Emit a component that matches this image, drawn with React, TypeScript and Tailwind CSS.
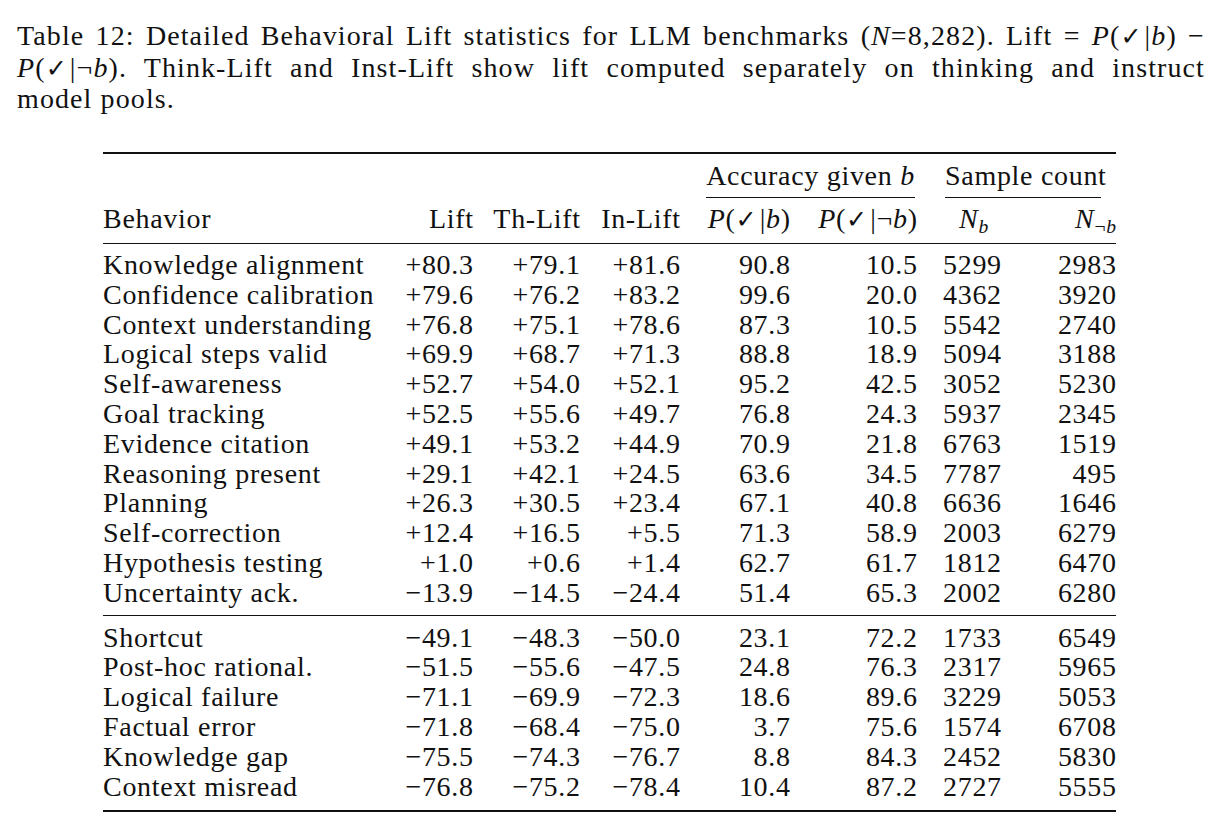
type Row = [string, string, string, string, string, string, string, string];

const cols = "grid grid-cols-[282px_88px_107px_100px_110px_127px_84px_115px]";
const num = "text-right -mr-[0.7px]";

const positive: Row[] = [
  ["Knowledge alignment", "+80.3", "+79.1", "+81.6", "90.8", "10.5", "5299", "2983"],
  ["Confidence calibration", "+79.6", "+76.2", "+83.2", "99.6", "20.0", "4362", "3920"],
  ["Context understanding", "+76.8", "+75.1", "+78.6", "87.3", "10.5", "5542", "2740"],
  ["Logical steps valid", "+69.9", "+68.7", "+71.3", "88.8", "18.9", "5094", "3188"],
  ["Self-awareness", "+52.7", "+54.0", "+52.1", "95.2", "42.5", "3052", "5230"],
  ["Goal tracking", "+52.5", "+55.6", "+49.7", "76.8", "24.3", "5937", "2345"],
  ["Evidence citation", "+49.1", "+53.2", "+44.9", "70.9", "21.8", "6763", "1519"],
  ["Reasoning present", "+29.1", "+42.1", "+24.5", "63.6", "34.5", "7787", "495"],
  ["Planning", "+26.3", "+30.5", "+23.4", "67.1", "40.8", "6636", "1646"],
  ["Self-correction", "+12.4", "+16.5", "+5.5", "71.3", "58.9", "2003", "6279"],
  ["Hypothesis testing", "+1.0", "+0.6", "+1.4", "62.7", "61.7", "1812", "6470"],
  ["Uncertainty ack.", "−13.9", "−14.5", "−24.4", "51.4", "65.3", "2002", "6280"],
];

const negative: Row[] = [
  ["Shortcut", "−49.1", "−48.3", "−50.0", "23.1", "72.2", "1733", "6549"],
  ["Post-hoc rational.", "−51.5", "−55.6", "−47.5", "24.8", "76.3", "2317", "5965"],
  ["Logical failure", "−71.1", "−69.9", "−72.3", "18.6", "89.6", "3229", "5053"],
  ["Factual error", "−71.8", "−68.4", "−75.0", "3.7", "75.6", "1574", "6708"],
  ["Knowledge gap", "−75.5", "−74.3", "−76.7", "8.8", "84.3", "2452", "5830"],
  ["Context misread", "−76.8", "−75.2", "−78.4", "10.4", "87.2", "2727", "5555"],
];

// P(✓|b) or P(✓|¬b), kept as one block so justification leaves it alone
function Prob({ neg }: { neg?: boolean }) {
  return (
    <span className="inline-block">
      <span className="italic">P</span>(
      <span className="font-['DejaVu_Sans',sans-serif] font-bold text-[0.9em] tracking-normal">✓</span>
      <span className="pl-[3px]">|</span>
      {neg && "¬"}
      <span className="italic">b</span>)
    </span>
  );
}

function DataRow({ r }: { r: Row }) {
  return (
    <div className={`${cols} h-[29.8px] leading-[29.8px]`}>
      <div>{r[0]}</div>
      <div className={num}>{r[1]}</div>
      <div className={num}>{r[2]}</div>
      <div className={num}>{r[3]}</div>
      <div className={num}>{r[4]}</div>
      <div className={num}>{r[5]}</div>
      <div className="pl-[26px]">{r[6]}</div>
      <div className={num}>{r[7]}</div>
    </div>
  );
}

export default function App() {
  return (
    <div className="w-[1219px] h-[831px] bg-white text-[#111] font-['Liberation_Serif',serif] text-[28px] tracking-[0.7px] whitespace-nowrap overflow-hidden">
      {/* caption */}
      <div className="pl-[17px] pt-[21px] w-[1205px] leading-[30.5px] tracking-[1.1px]">
        <div className="text-justify [text-align-last:justify]">
          Table 12: Detailed Behavioral Lift statistics for LLM benchmarks (<span className="italic">N</span>=8,282). Lift = <Prob /> −
        </div>
        <div className="text-justify [text-align-last:justify]">
          <Prob neg />. Think-Lift and Inst-Lift show lift computed separately on thinking and instruct
        </div>
        <div>model pools.</div>
      </div>

      {/* table */}
      <div className="ml-[103px] mt-[37px] w-[1013px]">
        <div className="h-[2px] bg-[#111]" />

        <div className={`${cols} pt-[7px]`}>
          <div className="col-start-5 col-span-2 ml-[26px] mr-[2px] pb-[6px] border-b border-[#111] text-center leading-[30.3px]">
            Accuracy given <span className="italic">b</span>
          </div>
          <div className="col-span-2 ml-[28px] mr-[15px] pb-[6px] border-b border-[#111] text-center leading-[30.3px]">
            Sample count
          </div>
        </div>

        <div className={`${cols} pt-[6px] pb-[8px] leading-[30.3px]`}>
          <div>Behavior</div>
          <div className={num}>Lift</div>
          <div className={num}>Th-Lift</div>
          <div className={num}>In-Lift</div>
          <div className={num}><Prob /></div>
          <div className={num}><Prob neg /></div>
          <div className="pl-[30px] text-center">
            <span className="italic">N</span>
            <sub className="italic text-[0.7em]">b</sub>
          </div>
          <div className={num}>
            <span className="italic">N</span>
            <sub className="text-[0.7em]">¬<span className="italic">b</span></sub>
          </div>
        </div>

        <div className="h-[1px] bg-[#111]" />

        <div className="pt-[6px] pb-[7px]">
          {positive.map((r) => (
            <DataRow key={r[0]} r={r} />
          ))}
        </div>

        <div className="h-[1px] bg-[#111]" />

        <div className="pt-[7px] pb-[9px]">
          {negative.map((r) => (
            <DataRow key={r[0]} r={r} />
          ))}
        </div>

        <div className="h-[2px] bg-[#111]" />
      </div>
    </div>
  );
}
